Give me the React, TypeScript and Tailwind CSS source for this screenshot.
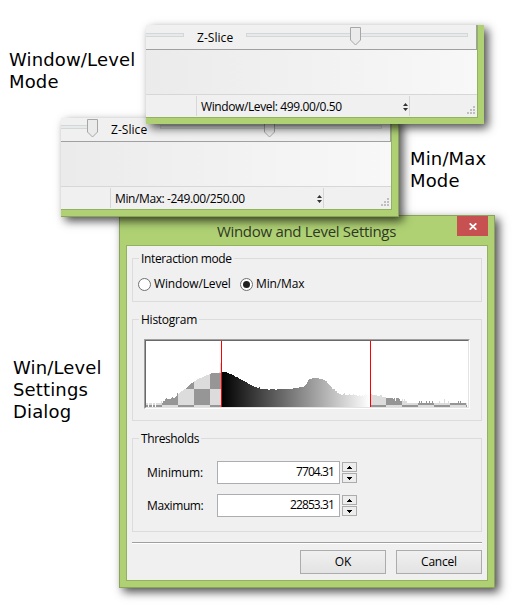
import type { ReactNode } from 'react';

const ui = "font-['Open_Sans','Noto_Sans',sans-serif] text-[12px] leading-[16px] text-black whitespace-nowrap";

function Thumb({ className }: { className: string }) {
  return (
    <svg className={`absolute top-[2px] ${className}`} width="11" height="19" viewBox="0 0 11 19">
      <path d="M0.5 0.5H10.5V13L5.5 18L0.5 13Z" fill="#ebebeb" stroke="#a6a6a6" />
    </svg>
  );
}

function Grip() {
  return (
    <svg width="9" height="9" viewBox="0 0 9 9" fill="#bfbfbf" shapeRendering="crispEdges">
      <path d="M6 0h2v2h-2zM3 3h2v2h-2zM6 3h2v2h-2zM0 6h2v2h-2zM3 6h2v2h-2zM6 6h2v2h-2z" />
    </svg>
  );
}

/* Lower right corner of the main window: slice slider, view and status bar. */
function StatusPane({ label, leftThumb }: { label: string; leftThumb?: boolean }) {
  return (
    <div className="h-[99px] w-[338px] bg-[#afd174] pr-[6px]">
      <div className="h-[93px] border-r border-b border-[#93b25f] bg-[#f0f0f0]">
        <div className="relative flex h-[25px] items-start border-r border-b border-[#a0a0a0]">
          <div className="mt-[8px] h-[4px] w-[38px] border border-l-0 border-[#d3d7d7] bg-[#e7eaea]" />
          <div className={`${ui} ml-[13px] mt-[5px] w-[49px] tracking-[0.05px]`}>Z-Slice</div>
          <div className="mt-[8px] h-[4px] w-[222px] border border-[#d3d7d7] bg-[#e7eaea]" />
          {leftThumb && <Thumb className="left-[27px]" />}
          <Thumb className="left-[204px]" />
        </div>
        <div className="h-[44px] bg-linear-to-r from-[#ebebeb] to-[#f8f8f8]" />
        <div className="flex h-[23px] items-center border-t border-[#d7d7d7]">
          <div className="h-[20px] w-[51px] border-r border-[#d7d7d7]" />
          <div className="flex h-[20px] w-[213px] items-center justify-between border-r border-[#d7d7d7] pl-[4px] pr-[1px]">
            <span className={`${ui} pt-[2px] tracking-[-0.39px]`}>{label}</span>
            <svg className="mt-[1px]" width="5" height="8" viewBox="0 0 5 8" fill="#333">
              <path d="M2.5 0L5 3H0zM0 5H5L2.5 8z" />
            </svg>
          </div>
          <div className="ml-auto mr-[1px] mt-[9px]"><Grip /></div>
        </div>
      </div>
    </div>
  );
}

function Group({ title, tracking, className, children }: { title: string; tracking: string; className: string; children: ReactNode }) {
  return (
    <fieldset className={`relative w-[350px] border border-[#dcdcdc] ${className}`}>
      <div className={`${ui} absolute -top-[8px] left-[6px] bg-[#f0f0f0] px-[2px] ${tracking}`}>{title}</div>
      {children}
    </fieldset>
  );
}

function Radio({ checked }: { checked?: boolean }) {
  return (
    <span className="flex h-[13px] w-[13px] items-center justify-center rounded-full border border-[#707070] bg-white">
      {checked && <span className="h-[7px] w-[7px] rounded-full bg-[#212121]" />}
    </span>
  );
}

/* Bin tops as [first column, top] runs, each lasting until the next one. */
const runs: [number, number][] = [
  [0, 62], [2, 66], [3, 62], [6, 66], [7, 62], [9, 66], [10, 62], [15, 60], [16, 62], [17, 60], [19, 58], [20, 57], [21, 58],
  [25, 57], [26, 56], [27, 57], [29, 56], [30, 55], [31, 52], [32, 53], [33, 52], [34, 51], [35, 50], [37, 49], [38, 48],
  [40, 47], [41, 46], [42, 45], [43, 44], [44, 43], [45, 42], [47, 41], [48, 40], [50, 39], [51, 38], [53, 37], [56, 36],
  [58, 35], [60, 34], [63, 33], [65, 32], [73, 31], [74, 22], [75, 31], [81, 32], [83, 33], [86, 34], [88, 35], [89, 36],
  [92, 37], [93, 38], [95, 39], [97, 40], [99, 41], [101, 42], [102, 43], [104, 44], [106, 45], [108, 46], [111, 47],
  [113, 46], [114, 48], [122, 49], [124, 48], [129, 49], [131, 48], [147, 47], [153, 46], [158, 45], [159, 44], [160, 43],
  [161, 41], [162, 39], [163, 38], [166, 37], [173, 38], [177, 39], [179, 40], [181, 42], [182, 43], [183, 44], [184, 45],
  [185, 46], [186, 48], [189, 50], [191, 52], [193, 53], [195, 54], [197, 53], [198, 52], [199, 54], [203, 53], [204, 54],
  [207, 53], [208, 54], [211, 55], [213, 54], [214, 55], [216, 54], [217, 55], [218, 54], [219, 53], [220, 54], [224, 53],
  [226, 54], [231, 55], [234, 54], [236, 56], [240, 57], [247, 58], [248, 57], [249, 60], [250, 57], [253, 58], [254, 60],
  [256, 58], [257, 60], [258, 58], [259, 60], [261, 62], [270, 62], [273, 60], [274, 62], [275, 60], [276, 62], [280, 60],
  [281, 62], [283, 60], [284, 62], [286, 60], [287, 62], [293, 60], [294, 62], [298, 58], [299, 62], [302, 60], [303, 62],
  [312, 60], [313, 62], [314, 60], [315, 62], [321, 66],
];
const bars = Array.from({ length: 322 }, (_, x) => runs.filter(([start]) => start <= x).pop()![1]);

function Histogram() {
  return (
    <svg className="block" width="322" height="66" viewBox="0 0 322 66" shapeRendering="crispEdges">
      <defs>
        <pattern id="checks" width="32" height="32" patternUnits="userSpaceOnUse">
          <rect width="32" height="32" fill="#dcdcdc" />
          <path d="M0 0h16v16h-16zM16 16h16v16h-16z" fill="#969696" />
        </pattern>
        <linearGradient id="ramp" gradientUnits="userSpaceOnUse" x1="75" x2="224" y1="0" y2="0">
          <stop stopColor="#000" />
          <stop offset="1" stopColor="#fff" />
        </linearGradient>
        <clipPath id="bars">
          {bars.map((top, x) => (
            <rect key={x} x={x} y={top} width="1" height={66 - top} />
          ))}
        </clipPath>
      </defs>
      <rect width="322" height="66" fill="#fff" />
      <g clipPath="url(#bars)">
        <rect width="322" height="66" fill="url(#checks)" />
        <rect x="75" width="149" height="66" fill="url(#ramp)" />
      </g>
      <path d="M75.5 0V66M224.5 0V66" stroke="#f00" />
    </svg>
  );
}

function Spin() {
  return (
    <div className="ml-[2px] flex flex-col gap-[1px]">
      {['M3 0h1v1h1v1h1v1h-5v-1h1v-1h1z', 'M1 0h5v1h-1v1h-1v1h-1v-1h-1v-1h-1z'].map((d) => (
        <div key={d} className="flex h-[10px] w-[15px] items-center justify-center border border-[#acacac] bg-[#ededed]">
          <svg width="7" height="3" viewBox="0 0 7 3" shapeRendering="crispEdges"><path d={d} /></svg>
        </div>
      ))}
    </div>
  );
}

function Field({ label, value, tracking }: { label: string; value: string; tracking: string }) {
  return (
    <div className="flex h-[23px] items-center">
      <span className={`${ui} w-[70px] ${tracking}`}>{label}</span>
      <span className={`${ui} flex h-[23px] w-[123px] items-center justify-end border border-[#abadb3] bg-white pb-[2px] pr-[5px] tracking-[-0.9px]`}>{value}</span>
      <Spin />
    </div>
  );
}

function Button({ children }: { children: ReactNode }) {
  return (
    <button className={`${ui} h-[24px] w-[86px] border border-[#acacac] bg-linear-to-b from-[#f0f0f0] to-[#e3e3e3] pb-[1px] tracking-[-0.2px]`}>
      {children}
    </button>
  );
}

function Dialog() {
  return (
    <div className="flex h-[373px] w-[376px] flex-col border border-[#8aa55a] bg-[#afd174]">
      <div className="flex h-[29px] justify-end">
        <h1 className="flex-1 pl-[36px] pt-[4px] text-center font-['Open_Sans','Noto_Sans',sans-serif] text-[15px] leading-[22px] tracking-[-0.3px] whitespace-nowrap text-[#303828]">
          Window and Level Settings
        </h1>
        <div className="mr-[6px] flex h-[20px] w-[31px] items-center justify-center bg-[#c75050]">
          <svg width="8" height="7" viewBox="0 0 8 7"><path d="M0.7 0.3L7.3 6.7M7.3 0.3L0.7 6.7" stroke="#fff" strokeWidth="1.7" /></svg>
        </div>
      </div>
      <div className="mx-[6px] h-[336px] border border-[#93b25f] bg-[#f0f0f0] pl-[5px] pt-[12px]">
        <Group title="Interaction mode" tracking="tracking-[-0.36px]" className="h-[44px]">
          <div className="flex items-center pl-[5px] pt-[17px]">
            <Radio />
            <span className={`${ui} ml-[3px] w-[86px] tracking-[-0.15px]`}>Window/Level</span>
            <Radio checked />
            <span className={`${ui} ml-[3px] tracking-[-0.15px]`}>Min/Max</span>
          </div>
        </Group>
        <Group title="Histogram" tracking="tracking-[-0.25px]" className="mt-[17px] h-[102px]">
          <div className="ml-[11px] mt-[19px] w-[326px] border border-t-[#a0a0a0] border-r-white border-b-white border-l-[#a0a0a0]">
            <div className="border border-t-[#696969] border-r-[#e3e3e3] border-b-[#e3e3e3] border-l-[#696969]">
              <Histogram />
            </div>
          </div>
        </Group>
        <Group title="Thresholds" tracking="tracking-[-0.4px]" className="mt-[17px] h-[94px]">
          <div className="flex flex-col gap-[10px] pl-[14px] pt-[22px]">
            <Field label="Minimum:" value="7704.31" tracking="tracking-[-0.1px]" />
            <Field label="Maximum:" value="22853.31" tracking="tracking-[-0.4px]" />
          </div>
        </Group>
        <div className="mt-[10px] h-[2px] w-[350px] border-b border-t border-b-white border-t-[#a0a0a0]" />
        <div className="mt-[6px] flex w-[350px] justify-end gap-[10px]">
          <Button>OK</Button>
          <Button>Cancel</Button>
        </div>
      </div>
    </div>
  );
}

const caption = "absolute font-['DejaVu_Sans',sans-serif] text-[18px] leading-[22px] tracking-[0.15px] text-black whitespace-nowrap";
const shadow = 'shadow-[4px_4px_9px_0px_rgba(0,0,0,0.7)]';

export default function App() {
  return (
    <main className="relative h-[607px] w-[514px] overflow-hidden bg-white">
      <p className={`${caption} left-[9px] top-[49px]`}>Window/Level<br />Mode</p>
      <p className={`${caption} left-[410px] top-[148px]`}>Min/Max<br />Mode</p>
      <p className={`${caption} left-[13px] top-[357px]`}>Win/Level<br />Settings<br />Dialog</p>
      <div className={`absolute left-[119px] top-[215px] ${shadow}`}><Dialog /></div>
      <div className={`absolute left-[61px] top-[118px] h-[99px] w-[338px] overflow-hidden border-r border-b border-[#8aa55a] bg-[#afd174] ${shadow}`}>
        <div className="-ml-[1px] -mt-[1px]"><StatusPane label="Min/Max: -249.00/250.00" leftThumb /></div>
      </div>
      <div className={`absolute left-[146px] top-[25px] ${shadow}`}>
        <StatusPane label="Window/Level: 499.00/0.50" />
      </div>
    </main>
  );
}
